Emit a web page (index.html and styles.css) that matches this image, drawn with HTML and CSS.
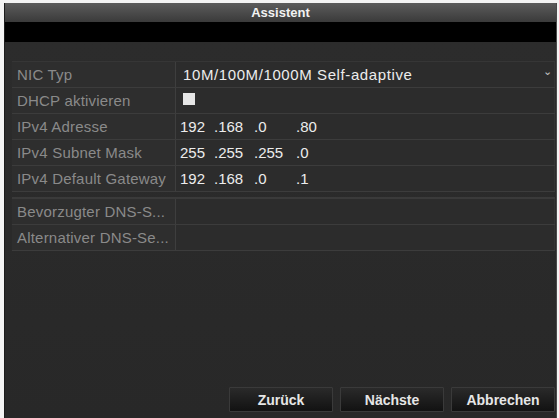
FILE: index.html
```html
<!DOCTYPE html>
<html lang="de">
<head>
    <meta charset="UTF-8">
    <meta name="viewport" content="width=device-width, initial-scale=1.0">
    <title>Assistent</title>
    <link rel="stylesheet" href="styles.css">
</head>
<body>
    <div class="window">
        <div class="titlebar">Assistent</div>
        <div class="band"></div>
        <div class="panel">
            <div class="group">
                <div class="row">
                    <div class="label">NIC Typ</div>
                    <div class="value select">10M/100M/1000M Self-adaptive<span class="arrow">&#8964;</span></div>
                </div>
                <div class="row">
                    <div class="label">DHCP aktivieren</div>
                    <div class="value"><span class="check"></span></div>
                </div>
                <div class="row">
                    <div class="label">IPv4 Adresse</div>
                    <div class="value ip"><span>192</span><span>.168</span><span>.0</span><span>.80</span></div>
                </div>
                <div class="row">
                    <div class="label">IPv4 Subnet Mask</div>
                    <div class="value ip"><span>255</span><span>.255</span><span>.255</span><span>.0</span></div>
                </div>
                <div class="row">
                    <div class="label">IPv4 Default Gateway</div>
                    <div class="value ip"><span>192</span><span>.168</span><span>.0</span><span>.1</span></div>
                </div>
            </div>
            <div class="group dns">
                <div class="row">
                    <div class="label">Bevorzugter DNS-S...</div>
                    <div class="value"></div>
                </div>
                <div class="row">
                    <div class="label">Alternativer DNS-Se...</div>
                    <div class="value"></div>
                </div>
            </div>
            <div class="buttons">
                <button>Zurück</button>
                <button>Nächste</button>
                <button>Abbrechen</button>
            </div>
        </div>
    </div>
</body>
</html>
```

FILE: styles.css
```css
body {
    margin: 0;
    background: #f4f4f4;
    font-family: "Liberation Sans", Arial, sans-serif;
}
.window {
    margin: 3px 2px 0 4px;
    height: 415px;
    display: flex;
    flex-direction: column;
    background: #2a2a2a;
    border-left: 1px solid #1c1c1c;
    border-right: 1px solid #4a4a4a;
}
.titlebar {
    height: 19px;
    line-height: 19px;
    text-align: center;
    color: #f2f2f2;
    font-size: 13px;
    font-weight: bold;
    background: linear-gradient(#5c5c5c, #3a3a3a);
}
.band {
    height: 20px;
    background: #000;
}
.panel {
    flex: 1;
    display: flex;
    flex-direction: column;
    padding: 19px 1px 6px 7px;
    background: linear-gradient(#2c2c2c, #282828);
}
.group {
    border-top: 1px solid #363636;
}
.group.dns {
    margin-top: 5px;
    border-top: 2px solid #3a3a3a;
}
.row {
    display: flex;
    height: 25px;
    border-bottom: 1px solid #3c3c3c;
}
.label {
    width: 158px;
    padding-left: 5px;
    line-height: 25px;
    font-size: 15px;
    letter-spacing: 0.2px;
    color: #8a8a8a;
    background: #2e2e2e;
    border-right: 1px solid #3e3e3e;
    white-space: nowrap;
    overflow: hidden;
}
.value {
    flex: 1;
    position: relative;
    padding-left: 4px;
    line-height: 25px;
    font-size: 15px;
    color: #ececec;
    background: #2c2c2c;
    border-right: 1px solid #333;
}
.select {
    padding-left: 7px;
    letter-spacing: 0.6px;
}
.arrow {
    position: absolute;
    right: 2px;
    top: -3px;
    font-size: 11px;
    letter-spacing: 0;
    color: #c4c4c4;
}
.check {
    display: inline-block;
    width: 12px;
    height: 12px;
    margin: 5px 0 0 3px;
    background: #e6e6e6;
    vertical-align: top;
}
.ip span {
    display: inline-block;
}
.ip span:nth-child(1) { width: 34px; }
.ip span:nth-child(2) { width: 40px; }
.ip span:nth-child(3) { width: 42px; }
.buttons {
    margin-top: auto;
    display: flex;
    justify-content: flex-end;
    gap: 7px;
}
.buttons button {
    width: 104px;
    height: 25px;
    font-family: "Liberation Sans", Arial, sans-serif;
    font-size: 14px;
    font-weight: bold;
    color: #e6e6e6;
    background: linear-gradient(#2a2a2a, #121212);
    border: 1px solid #3a3a3a;
    border-radius: 1px;
    cursor: pointer;
}
```
